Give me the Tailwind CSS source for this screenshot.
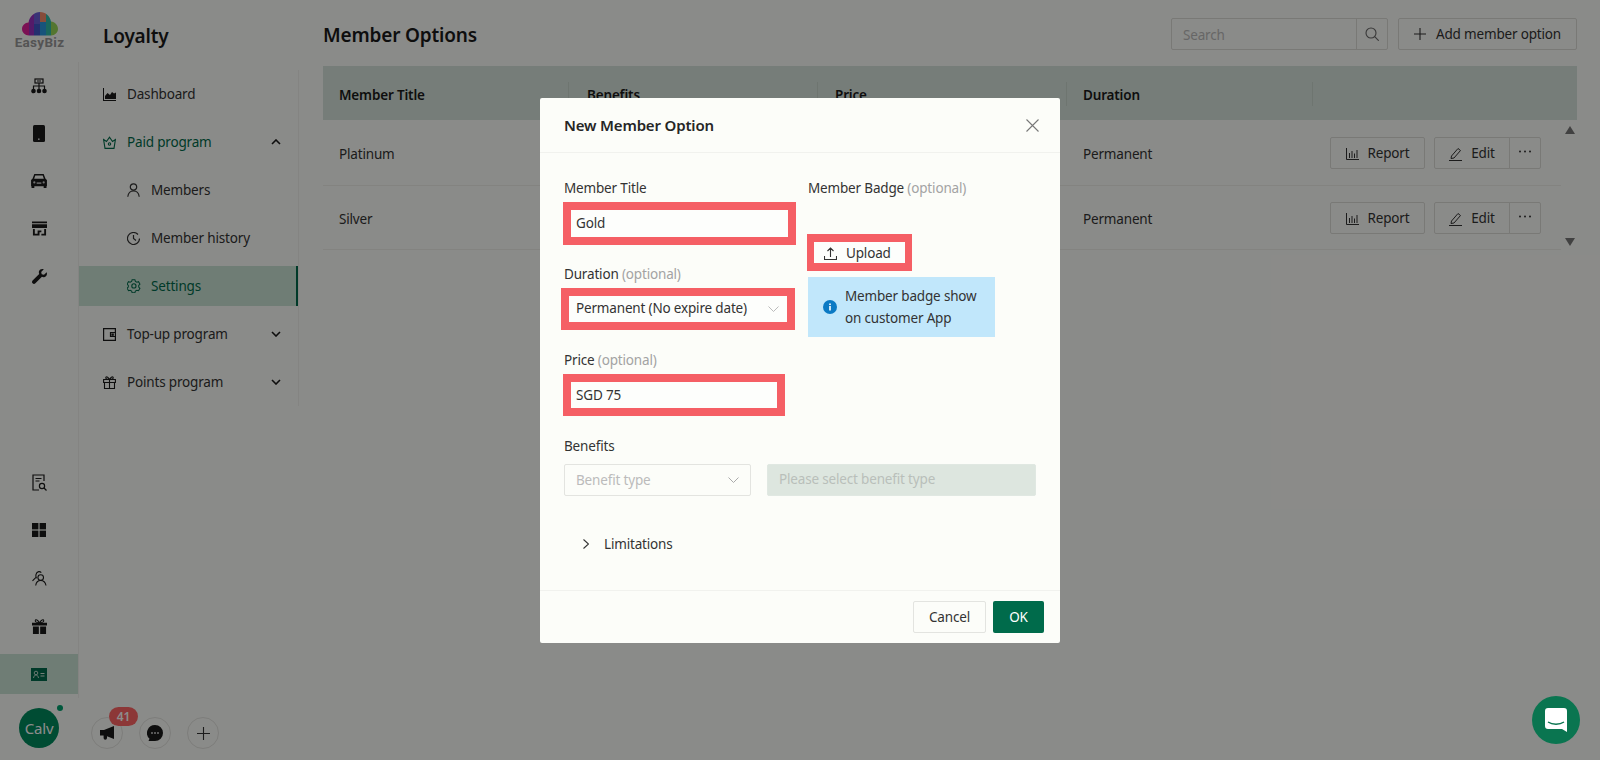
<!DOCTYPE html>
<html lang="en">
<head>
<meta charset="utf-8">
<title>Member Options</title>
<script src="https://cdn.jsdelivr.net/npm/@tailwindcss/browser@4"></script>
</head>
<body class="relative h-[761px] w-[1600px] overflow-hidden bg-white font-['Noto_Sans',sans-serif] text-[13.5px] tracking-[-0.17px] text-[#333]">
  <div class="flex h-[760px] bg-[#fcfdf9]">
    <!-- Left side: icon rail + loyalty menu + footer -->
    <aside class="flex w-[323px] shrink-0 flex-col">
      <div class="flex min-h-0 flex-1">
        <!-- Icon rail -->
        <div class="flex w-[79px] shrink-0 flex-col">
          <div class="flex h-[62px] shrink-0 flex-col items-center pt-[12px]">
            <svg width="36" height="24" viewBox="0 0 36 24">
              <defs><clipPath id="cloud"><path d="M7 23.500C3 23.500 0 20.500 0 17s3-6.500 6.500-6.500C7.500 4.500 12.500 0 18 0c5.500 0 10 4 11 9.500 4 .5 7 3.500 7 7.500 0 3.500-3 6.500-7 6.500z"/></clipPath></defs>
              <g clip-path="url(#cloud)">
                <rect x="0" y="0" width="7" height="24" fill="#e0209a"/>
                <rect x="7" y="0" width="5" height="24" fill="#9a30c0"/>
                <rect x="12" y="0" width="6" height="12" fill="#6a5ed8"/>
                <rect x="12" y="12" width="6" height="12" fill="#4256c8"/>
                <rect x="18" y="0" width="6" height="10" fill="#f58a6a"/>
                <rect x="18" y="10" width="6" height="14" fill="#2a9ae0"/>
                <rect x="24" y="0" width="5" height="24" fill="#30bcaa"/>
                <rect x="29" y="0" width="7" height="24" fill="#9ad858"/>
              </g>
            </svg>
            <span class="font-['Roboto',sans-serif] text-[13.500px] leading-[13px] font-bold tracking-[0.3px] text-[#999]">EasyBiz</span>
          </div>
          <nav class="flex flex-1 flex-col justify-between border-r border-[#f0f1ed]">
            <div class="flex flex-col">
              <a class="flex h-[47.700px] items-center justify-center">
                <svg width="16" height="16" viewBox="0 0 16 16" fill="none" stroke="#1a1a1a" stroke-width="1.200"><rect x="4" y="1" width="8" height="4"/><path d="M6 3h4M8 5v3M2.500 11V8h11v3M8 8v3"/><circle cx="2.500" cy="13" r="1.700" fill="#1a1a1a"/><circle cx="8" cy="13" r="1.700" fill="#1a1a1a"/><circle cx="13.500" cy="13" r="1.700" fill="#1a1a1a"/></svg>
              </a>
              <a class="flex h-[47.700px] items-center justify-center">
                <svg width="12" height="17" viewBox="0 0 12 17"><rect width="12" height="17" rx="1.500" fill="#1a1a1a"/><rect x="5" y="13.500" width="1.600" height="1.400" fill="#ddd"/></svg>
              </a>
              <a class="flex h-[47.700px] items-center justify-center">
                <svg width="16" height="14" viewBox="0 0 17 15" fill="#1a1a1a"><path d="M3.500 0h10L15.500 5 17 6.500V13h-.5v2h-3v-2h-10v2h-3v-2H0V6.500L1.500 5zM4.500 1.500 3.300 5h10.400l-1.200-3.500z"/><circle cx="3.500" cy="9" r="1.200" fill="#ccc"/><circle cx="13.500" cy="9" r="1.200" fill="#ccc"/><rect x="6" y="9" width="5" height="1.500" fill="#ccc"/></svg>
              </a>
              <a class="flex h-[47.700px] items-center justify-center">
                <svg width="15" height="15" viewBox="0 0 16 15" fill="#1a1a1a"><path d="M0 0h16v2H0zM0 3h16v4H0zM1 8h2v5h3V9.500h4V13h3V8h2v7h-5v-3.500H8V15H1z"/></svg>
              </a>
              <a class="flex h-[47.700px] items-center justify-center">
                <svg width="15" height="15" viewBox="0 0 15 15" fill="#1a1a1a"><path d="M14.700 3.200 12 5.800l-2.300-.5-.5-2.300L11.800.3C9.800-.4 7.700.3 7 2.200c-.3 1-.2 2 .2 2.800L.6 11.500c-.8.800-.8 2 0 2.800.8.800 2 .8 2.800 0L9.900 7.800c.8.400 1.800.5 2.800.2 1.900-.7 2.700-2.800 2-4.800z"/></svg>
              </a>
            </div>
            <div class="flex flex-col">
              <a class="flex h-[48px] items-center justify-center">
                <svg width="15" height="17" viewBox="0 0 15 17" fill="none" stroke="#1a1a1a" stroke-width="1.200"><path d="M12 7V1H1v15h6"/><path d="M3.500 4.500h6M3.500 7h4"/><circle cx="10" cy="12" r="2.600"/><path d="m12 14 2.500 2.500"/></svg>
              </a>
              <a class="flex h-[48px] items-center justify-center">
                <svg width="14" height="14" viewBox="0 0 14 14" fill="#1a1a1a"><rect width="6.400" height="6.400"/><rect x="7.600" width="6.400" height="6.400"/><rect y="7.600" width="6.400" height="6.400"/><rect x="7.600" y="7.600" width="6.400" height="6.400"/></svg>
              </a>
              <a class="flex h-[48px] items-center justify-center">
                <svg width="15" height="15" viewBox="0 0 15 15" fill="none" stroke="#1a1a1a" stroke-width="1.100"><circle cx="8.700" cy="6.500" r="2.800"/><path d="M3.700 14.500c.4-3 2.400-5 5-5s4.700 2 5.300 5M4.600 7.300C3.300 5.500 3.700 1 6.700.6c1.200-.1 2 .3 2.600 1M3.700 6.600.5 9.800"/></svg>
              </a>
              <a class="flex h-[48px] items-center justify-center">
                <svg width="15" height="15" viewBox="0 0 16 16" fill="#1a1a1a"><path d="M0 4h16v3H0zM1 8h6.300v8H1zM8.700 8H15v8H8.700z"/><path d="M8 4C6 1 4 0 3.500 1.500S5 4 8 4c3 0 5-1 4.500-2.500S10 1 8 4z" fill="none" stroke="#1a1a1a" stroke-width="1.100"/></svg>
              </a>
              <a class="mt-[4px] mb-[4px] flex h-[40px] items-center justify-center bg-[#cbe3d6]">
                <svg width="16" height="13" viewBox="0 0 16 13"><rect width="16" height="13" fill="#006b4b"/><circle cx="5" cy="5" r="1.800" fill="none" stroke="#d5e5da" stroke-width=".9"/><path d="M2.500 10c.3-2 1.300-3 2.500-3s2.200 1 2.500 3" fill="none" stroke="#d5e5da" stroke-width=".9"/><path d="M9.500 5.500h4M9.500 8h4" stroke="#d5e5da"/></svg>
              </a>
            </div>
          </nav>
        </div>
        <!-- Loyalty menu -->
        <div class="w-[220px] shrink-0">
          <h2 class="flex h-[70px] items-start pt-[19px] pl-[24px] text-[19px] leading-[34px] font-semibold text-[#1a1a1a]">Loyalty</h2>
          <nav class="flex h-[336px] flex-col border-r border-[#f0f1ed]">
            <a class="flex h-[48px] items-center pl-[24px]">
              <svg class="mr-[11px]" width="13" height="13" viewBox="0 0 13 13" fill="#1a1a1a"><path d="M0 0h1v12h12v1H0z"/><path d="M2 11V8l2.500-3L7 7l2-3 2 1.500 2-1V11z"/></svg>
              <span>Dashboard</span>
            </a>
            <a class="flex h-[48px] items-center pl-[24px] text-[#006b4b]">
              <svg class="mr-[11px]" width="13" height="13" viewBox="0 0 13 13" fill="none" stroke="#006b4b" stroke-width="1.100"><path d="M.6 3.500 3.500 5.500 6.500 1.200l3 4.300 2.900-2L11 12.400H2z"/><circle cx="6.500" cy="8" r="1.200"/></svg>
              <span>Paid program</span>
              <svg class="mr-[17px] ml-auto" width="10" height="6" viewBox="0 0 10 6" fill="none" stroke="#1a1a1a" stroke-width="1.600"><path d="m1 5 4-4 4 4"/></svg>
            </a>
            <a class="flex h-[48px] items-center pl-[48px]">
              <svg class="mr-[11px]" width="13" height="14" viewBox="0 0 13 14" fill="none" stroke="#333" stroke-width="1.200"><circle cx="6.500" cy="4" r="3.200"/><path d="M.8 13.800c.3-3.600 2.700-6 5.700-6s5.400 2.400 5.700 6"/></svg>
              <span>Members</span>
            </a>
            <a class="flex h-[48px] items-center pl-[48px]">
              <svg class="mr-[11px]" width="13" height="13" viewBox="0 0 13 13" fill="none" stroke="#333" stroke-width="1.200"><path d="M11 2.500A6 6 0 1 0 12.500 6.500"/><path d="M6.500 3v3.500l2.500 2"/></svg>
              <span>Member history</span>
            </a>
            <a class="my-[4px] flex h-[40px] items-center border-r-2 border-[#006b4b] bg-[#cbe3d6] pl-[48px] text-[#006b4b]">
              <svg class="mr-[10px]" width="14" height="14" viewBox="0 0 14 14" fill="none" stroke="#006b4b" stroke-width="1.100"><path d="m5.500.7 3 0 .5 1.800 1.600.9 1.800-.5 1.500 2.600-1.300 1.400v1.800l1.300 1.300-1.500 2.600-1.800-.5-1.600.9-.5 1.800h-3l-.5-1.800-1.600-.9-1.800.5L.1 9.900l1.300-1.300V6.900L.1 5.500l1.500-2.600 1.800.5L5 2.500z" transform="scale(.93)"/><circle cx="6.900" cy="6.900" r="2.100"/></svg>
              <span>Settings</span>
            </a>
            <a class="flex h-[48px] items-center pl-[24px]">
              <svg class="mr-[11px]" width="13" height="13" viewBox="0 0 13 13" fill="none" stroke="#1a1a1a" stroke-width="1.200"><path d="M.6.6h11.800v11.800H.6z"/><path d="M12.400 4.500H7.500v4h4.900" /><rect x="9" y="6" width="1.200" height="1.200" fill="#1a1a1a"/></svg>
              <span>Top-up program</span>
              <svg class="mr-[17px] ml-auto" width="10" height="6" viewBox="0 0 10 6" fill="none" stroke="#1a1a1a" stroke-width="1.600"><path d="m1 1 4 4 4-4"/></svg>
            </a>
            <a class="flex h-[48px] items-center pl-[24px]">
              <svg class="mr-[11px]" width="13" height="13" viewBox="0 0 13 13" fill="none" stroke="#1a1a1a" stroke-width="1.100"><path d="M.6 3.500h11.800v3H.6zM1.500 6.500h10v6h-10zM6.500 3.500v9M6.500 3.500C5 1 3 .2 2.800 1.500S4 3.500 6.500 3.500c2.500 0 3.900-.7 3.700-2S8 1 6.500 3.500z"/></svg>
              <span>Points program</span>
              <svg class="mr-[17px] ml-auto" width="10" height="6" viewBox="0 0 10 6" fill="none" stroke="#1a1a1a" stroke-width="1.600"><path d="m1 1 4 4 4-4"/></svg>
            </a>
          </nav>
        </div>
      </div>
      <!-- Footer actions -->
      <div class="flex h-[62px] shrink-0 items-start pt-[10px] pl-[19px]">
        <div class="relative flex h-[40px] w-[40px] items-center justify-center rounded-full bg-[#008a5e] text-[15px] text-white">
          Calv
          <span class="absolute top-[-3px] right-[-4px] h-[6px] w-[6px] rounded-full bg-[#00a06e]"></span>
        </div>
        <button class="relative mt-[9px] ml-[32px] flex h-[32px] w-[32px] items-center justify-center rounded-full border border-[#e3e4e0]">
          <svg width="15" height="14" viewBox="0 0 15 14" fill="#1a1a1a"><path d="M0 4h4l10-4v13L7 10.200V12a1.700 1.700 0 0 1-3.400 0v-2.500H0z"/></svg>
          <span class="absolute top-[-11px] left-[17px] flex h-[19px] w-[29px] items-center justify-center rounded-full bg-[#ff6464] text-[12px] font-semibold text-white">41</span>
        </button>
        <button class="mt-[9px] ml-[16px] flex h-[32px] w-[32px] items-center justify-center rounded-full border border-[#e3e4e0]">
          <svg width="16" height="16" viewBox="0 0 16 16"><path d="M8 0a8 8 0 0 1 0 16H1.500l1-2.200A8 8 0 0 1 8 0z" fill="#1a1a1a"/><circle cx="5" cy="8" r="1" fill="#ccc"/><circle cx="8" cy="8" r="1" fill="#ccc"/><circle cx="11" cy="8" r="1" fill="#ccc"/></svg>
        </button>
        <button class="mt-[9px] ml-[16px] flex h-[32px] w-[32px] items-center justify-center rounded-full border border-[#e3e4e0]">
          <svg width="13" height="13" viewBox="0 0 13 13" stroke="#333" stroke-width="1.100"><path d="M6.500 0v13M0 6.500h13"/></svg>
        </button>
      </div>
    </aside>

    <!-- Main content -->
    <main class="w-[1254px] shrink-0">
      <div class="flex h-[66px] items-start justify-between pt-[18px]">
        <h1 class="text-[19px] leading-[34px] font-semibold text-[#1a1a1a]">Member Options</h1>
        <div class="flex gap-[10px]">
          <div class="flex h-[32px] w-[217px] rounded-[2px] border border-[#dcdcd8]">
            <span class="flex-1 pl-[11px] leading-[32px] text-[#bbb]">Search</span>
            <span class="flex w-[31px] items-center justify-center border-l border-[#dcdcd8]">
              <svg width="14" height="14" viewBox="0 0 14 14" fill="none" stroke="#666" stroke-width="1.100"><circle cx="6" cy="6" r="5"/><path d="m9.700 9.700 4 4"/></svg>
            </span>
          </div>
          <button class="flex h-[32px] w-[179px] items-center justify-center rounded-[2px] border border-[#dcdcd8]">
            <svg class="mr-[10px]" width="12" height="12" viewBox="0 0 12 12" stroke="#333" stroke-width="1.100"><path d="M6 0v12M0 6h12"/></svg>
            Add member option
          </button>
        </div>
      </div>
      <!-- Table header -->
      <div class="grid h-[54px] grid-cols-[246px_249px_249px_246px_1fr] items-center bg-[#d8e4dc] pt-[2px] font-semibold text-[#1a1a1a]">
        <div class="h-[24px] border-r border-[#c9d6cd] pl-[16px] leading-[26px]">Member Title</div>
        <div class="h-[24px] border-r border-[#c9d6cd] pl-[18px] leading-[26px]">Benefits</div>
        <div class="h-[24px] border-r border-[#c9d6cd] pl-[17px] leading-[26px]">Price</div>
        <div class="h-[24px] border-r border-[#c9d6cd] pl-[16px] leading-[26px]">Duration</div>
        <div></div>
      </div>
      <!-- Table rows -->
      <div class="relative">
        <div class="grid h-[66px] w-[1238px] grid-cols-[246px_249px_249px_246px_1fr] items-center border-b border-[#eeefea]">
          <div class="pt-[3px] pl-[16px]">Platinum</div>
          <div></div>
          <div></div>
          <div class="pt-[3px] pl-[16px]">Permanent</div>
          <div class="flex justify-end pr-[20px]">
            <button class="flex h-[32px] w-[95px] items-center justify-center rounded-[2px] border border-[#dcdcd8] pt-[2px]">
              <svg class="mr-[9px]" width="13" height="12" viewBox="0 0 13 12" fill="none" stroke="#333"><path d="M.5 0v11.500H13"/><path d="M3.500 5v5M6 3v7M8.500 5.500V10M11 2v8"/></svg>
              Report
            </button>
            <button class="ml-[9px] flex h-[32px] w-[76px] items-center justify-center rounded-l-[2px] border border-[#dcdcd8] pt-[2px]">
              <svg class="mr-[9px]" width="13" height="14" viewBox="0 0 13 14" fill="none" stroke="#333"><path d="M2.500 9 9 1.500l2.500 2L5 11l-3 .5zM0 13.500h13"/></svg>
              Edit
            </button>
            <button class="-ml-px flex h-[32px] w-[32px] items-center justify-center rounded-r-[2px] border border-[#dcdcd8] pb-[2px]">
              <svg width="14" height="3" viewBox="0 0 14 3" fill="#333"><circle cx="2" cy="1.500" r="1"/><circle cx="7" cy="1.500" r="1"/><circle cx="12" cy="1.500" r="1"/></svg>
            </button>
          </div>
        </div>
        <div class="grid h-[64px] w-[1238px] grid-cols-[246px_249px_249px_246px_1fr] items-center border-b border-[#eeefea]">
          <div class="pt-[3px] pl-[16px]">Silver</div>
          <div></div>
          <div></div>
          <div class="pt-[3px] pl-[16px]">Permanent</div>
          <div class="flex justify-end pr-[20px]">
            <button class="flex h-[32px] w-[95px] items-center justify-center rounded-[2px] border border-[#dcdcd8] pt-[2px]">
              <svg class="mr-[9px]" width="13" height="12" viewBox="0 0 13 12" fill="none" stroke="#333"><path d="M.5 0v11.500H13"/><path d="M3.500 5v5M6 3v7M8.500 5.500V10M11 2v8"/></svg>
              Report
            </button>
            <button class="ml-[9px] flex h-[32px] w-[76px] items-center justify-center rounded-l-[2px] border border-[#dcdcd8] pt-[2px]">
              <svg class="mr-[9px]" width="13" height="14" viewBox="0 0 13 14" fill="none" stroke="#333"><path d="M2.500 9 9 1.500l2.500 2L5 11l-3 .5zM0 13.500h13"/></svg>
              Edit
            </button>
            <button class="-ml-px flex h-[32px] w-[32px] items-center justify-center rounded-r-[2px] border border-[#dcdcd8] pb-[2px]">
              <svg width="14" height="3" viewBox="0 0 14 3" fill="#333"><circle cx="2" cy="1.500" r="1"/><circle cx="7" cy="1.500" r="1"/><circle cx="12" cy="1.500" r="1"/></svg>
            </button>
          </div>
        </div>
        <!-- Scroll arrows -->
        <svg class="absolute top-[6px] right-[2px]" width="10" height="8" viewBox="0 0 10 8" fill="#777"><path d="M5 0l5 8H0z"/></svg>
        <svg class="absolute top-[118px] right-[2px]" width="10" height="8" viewBox="0 0 10 8" fill="#777"><path d="M5 8 0 0h10z"/></svg>
      </div>
    </main>
  </div>

  <!-- Overlay -->
  <div class="absolute top-0 left-0 z-10 h-[760px] w-[1600px] bg-black/45"></div>

  <!-- New Member Option modal -->
  <div class="absolute top-[98px] left-[540px] z-20 flex h-[545px] w-[520px] flex-col rounded-[2px] bg-[#fcfdf9]">
    <div class="flex h-[55px] shrink-0 items-center justify-between border-b border-[#f1f2ee] pr-[21px] pl-[24px]">
      <h3 class="pt-[1px] text-[15px] font-semibold text-[#262626]">New Member Option</h3>
      <svg width="13" height="13" viewBox="0 0 13 13" stroke="#777" stroke-width="1.100"><path d="m.5.5 12 12M12.500.5l-12 12"/></svg>
    </div>
    <div class="flex-1 pl-[23px]">
      <div class="flex gap-[11px] pt-[25px]">
        <!-- Left column -->
        <div class="w-[233px] shrink-0">
          <label class="ml-[1px] block h-[20px] leading-[20px]">Member Title</label>
          <div class="mt-[4px] flex h-[43px] w-[233px] items-center border-8 border-[#f55f65] bg-[#fdfefc] pl-[5px]">Gold</div>
          <label class="mt-[19px] ml-[1px] block h-[20px] leading-[20px]">Duration <span class="text-[#a3a3a3]">(optional)</span></label>
          <div class="mt-[4px] -ml-[2px] flex h-[42px] w-[234px] items-center justify-between border-8 border-[#f55f65] bg-[#fdfefc] pr-[8px] pl-[7px]">
            <span class="pb-[2px] whitespace-nowrap">Permanent (No expire date)</span>
            <svg width="11" height="6" viewBox="0 0 11 6" fill="none" stroke="#bbb"><path d="m.5.5 5 5 5-5"/></svg>
          </div>
          <label class="mt-[20px] ml-[1px] block h-[20px] leading-[20px]">Price <span class="text-[#a3a3a3]">(optional)</span></label>
          <div class="mt-[4px] flex h-[42px] w-[222px] items-center border-8 border-[#f55f65] bg-[#fdfefc] pl-[5px]">SGD 75</div>
        </div>
        <!-- Right column -->
        <div class="w-[190px]">
          <label class="ml-[1px] block h-[20px] leading-[20px] whitespace-nowrap">Member Badge <span class="text-[#a3a3a3]">(optional)</span></label>
          <button class="mt-[36px] flex h-[37px] w-[105px] items-center border-x-[7px] border-y-8 border-[#f55f65] bg-[#fdfefc] pt-[2px] pl-[10px]">
            <svg class="mr-[9px]" width="13" height="13" viewBox="0 0 13 13" fill="none" stroke="#333" stroke-width="1.100"><path d="M6.500 10V1M3.500 4l3-3 3 3M.5 9v3.500h12V9"/></svg>
            Upload
          </button>
          <div class="mt-[6px] ml-[1px] flex h-[60px] w-[187px] items-center bg-[#c1e7fb] pl-[15px]">
            <svg class="mr-[8px] shrink-0" width="14" height="14" viewBox="0 0 14 14"><circle cx="7" cy="7" r="7" fill="#0b7ac4"/><rect x="6.200" y="6" width="1.600" height="4.500" fill="#fff"/><rect x="6.200" y="3.500" width="1.600" height="1.600" fill="#fff"/></svg>
            <p class="leading-[22px]">Member badge show<br>on customer App</p>
          </div>
        </div>
      </div>
      <label class="mt-[20px] ml-[1px] block h-[20px] leading-[20px]">Benefits</label>
      <div class="mt-[8px] flex gap-[16px]">
        <div class="ml-[1px] flex h-[32px] w-[187px] items-center justify-between rounded-[2px] border border-[#e3e4e0] pr-[11px] pl-[11px] text-[#bbb]">
          <span>Benefit type</span>
          <svg width="11" height="6" viewBox="0 0 11 6" fill="none" stroke="#aaa"><path d="m.5.5 5 5 5-5"/></svg>
        </div>
        <div class="flex h-[32px] w-[269px] items-center rounded-[2px] border border-[#e0e8e2] bg-[#dde6df] pb-[1px] pl-[11px] text-[#b9bfba]">Please select benefit type</div>
      </div>
      <div class="mt-[36px] flex h-[24px] items-center pl-[20px]">
        <svg class="mr-[15px]" width="6" height="10" viewBox="0 0 6 10" fill="none" stroke="#333" stroke-width="1.100"><path d="m.5.5 5 4.500-5 4.500"/></svg>
        <span class="pt-[1px]">Limitations</span>
      </div>
    </div>
    <div class="flex h-[53px] shrink-0 justify-end gap-[7px] border-t border-[#f1f2ee] pt-[10px] pr-[16px]">
      <button class="h-[32px] w-[73px] rounded-[2px] border border-[#e3e4e0]">Cancel</button>
      <button class="h-[32px] w-[51px] rounded-[2px] bg-[#006b4b] text-white">OK</button>
    </div>
  </div>

  <!-- Chat launcher -->
  <button class="absolute top-[696px] left-[1532px] z-20 flex h-[48px] w-[48px] items-center justify-center rounded-full bg-[#0a7550]">
    <svg width="22" height="24" viewBox="0 0 22 24"><path d="M3 0h16a3 3 0 0 1 3 3v21l-5-3H3a3 3 0 0 1-3-3V3a3 3 0 0 1 3-3z" fill="#fff"/><path d="M3 14c4.500 3 11.500 3 16 0" fill="none" stroke="#0a7550" stroke-width="1.400"/></svg>
  </button>
</body>
</html>
